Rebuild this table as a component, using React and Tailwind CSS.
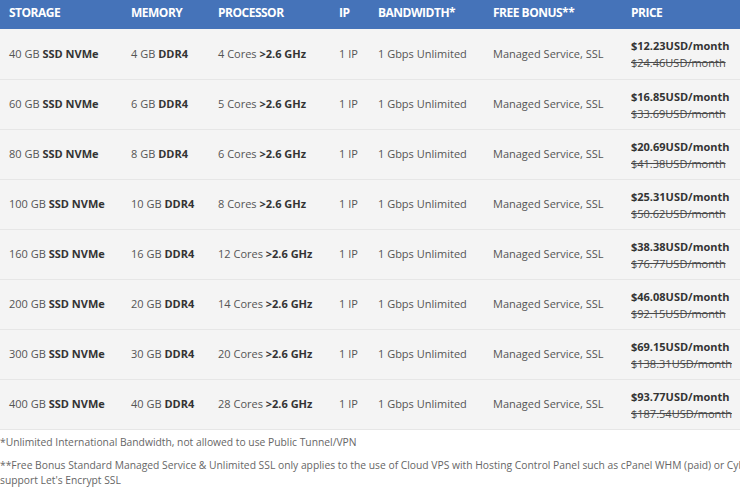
import React from "react";

const rows = [
  ["40", "4", "4", "$12.23", "$24.46"],
  ["60", "6", "5", "$16.85", "$33.69"],
  ["80", "8", "6", "$20.69", "$41.38"],
  ["100", "10", "8", "$25.31", "$50.62"],
  ["160", "16", "12", "$38.38", "$76.77"],
  ["200", "20", "14", "$46.08", "$92.15"],
  ["300", "30", "20", "$69.15", "$138.31"],
  ["400", "40", "28", "$93.77", "$187.54"],
];

export default function App() {
  return (
    <div
      className="w-[740px] h-[493px] overflow-hidden bg-white text-[11px] text-[#555]"
      style={{ fontFamily: '"Open Sans", sans-serif' }}
    >
      <div className="w-[870px]">
        <table className="border-collapse table-fixed w-[800px]">
          <colgroup>
            <col className="w-[122px]" />
            <col className="w-[87px]" />
            <col className="w-[121px]" />
            <col className="w-[39px]" />
            <col className="w-[115px]" />
            <col className="w-[138px]" />
            <col className="w-[178px]" />
          </colgroup>
          <thead>
            <tr className="bg-[#4573b9] text-white h-[29px]">
              {["STORAGE", "MEMORY", "PROCESSOR", "IP", "BANDWIDTH*", "FREE BONUS**", "PRICE"].map((h) => (
                <th
                  key={h}
                  className="text-left font-bold text-[12px] tracking-[-0.5px] pl-[9px] pb-[4px] align-middle whitespace-nowrap"
                >
                  {h}
                </th>
              ))}
            </tr>
          </thead>
          <tbody>
            {rows.map((r) => (
              <tr key={r[0]} className="bg-[#f4f4f4] border-b border-[#e6e6e6] h-[50px]">
                <td className="pl-[9px] pt-[1px] whitespace-nowrap">
                  {r[0]} GB <b className="text-[#333]">SSD NVMe</b>
                </td>
                <td className="pl-[9px] pt-[1px] whitespace-nowrap">
                  {r[1]} GB <b className="text-[#333]">DDR4</b>
                </td>
                <td className="pl-[9px] pt-[1px] whitespace-nowrap">
                  {r[2]} Cores <b className="text-[#333]">&gt;2.6 GHz</b>
                </td>
                <td className="pl-[9px] pt-[1px] whitespace-nowrap">1 IP</td>
                <td className="pl-[9px] pt-[1px] whitespace-nowrap">1 Gbps Unlimited</td>
                <td className="pl-[9px] pt-[1px] whitespace-nowrap">Managed Service, SSL</td>
                <td className="pl-[9px] pt-[1px] whitespace-nowrap leading-[17px]">
                  <div className="font-bold text-[#333]">{r[3]}USD/month</div>
                  <div className="line-through text-[#4a4a4a]">{r[4]}USD/month</div>
                </td>
              </tr>
            ))}
          </tbody>
        </table>
        <div className="text-[10.3px] text-[#666] leading-[15px] pt-[5px]">
          <p className="mb-[8px]">*Unlimited International Bandwidth, not allowed to use Public Tunnel/VPN</p>
          <p>
            **Free Bonus Standard Managed Service &amp; Unlimited SSL only applies to the use of Cloud VPS with Hosting
            Control Panel such as cPanel WHM (paid) or CyberPanel (free) that support Let's Encrypt SSL
          </p>
        </div>
      </div>
    </div>
  );
}
